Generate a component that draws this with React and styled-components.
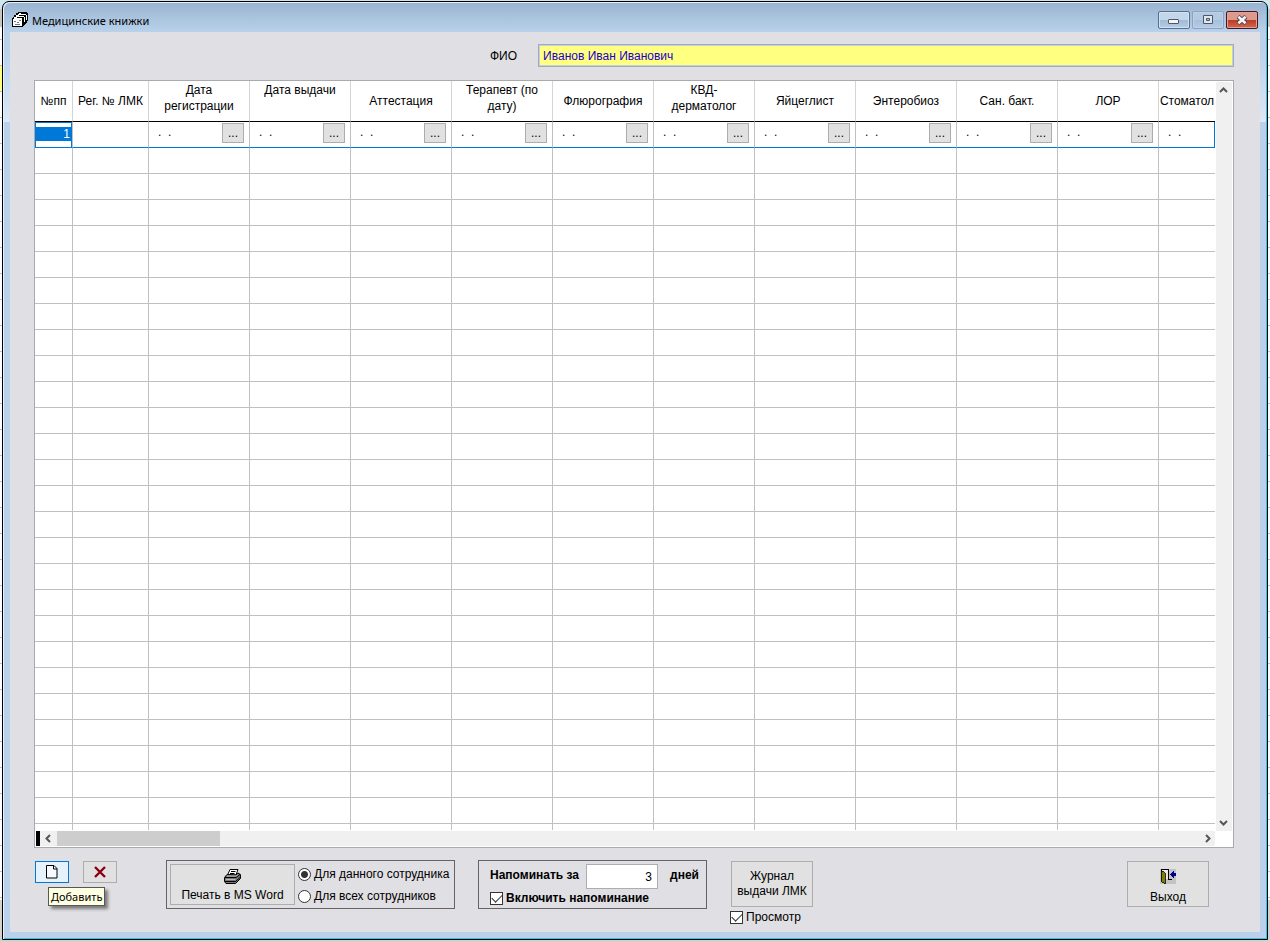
import { useState } from 'react';
import styled, { createGlobalStyle, css } from 'styled-components';

const GlobalStyle = createGlobalStyle`
    * {
        box-sizing: border-box;
    }
    body {
        margin: 0;
        background: #d4d0cb;
        font-family: "Liberation Sans", Arial, sans-serif;
        font-size: 12px;
        line-height: 16px;
        color: #000;
    }
    button, input {
        font: inherit;
        color: inherit;
    }
`;

const Desktop = styled.div`
    height: 100vh;
    min-height: 480px;
    padding: 1px 2px 2px;
    background:
        linear-gradient(#cfe6ee 0 9px, #c9c5bf 9px 27px, transparent 27px 66px, #ffff80 66px 91px, transparent 91px) left / 2px 100% no-repeat,
        linear-gradient(#cfe6ee 0 9px, #c9c5bf 9px 27px, transparent 27px) right / 2px 100% no-repeat,
        linear-gradient(to top, #d4d0cb 0 42px, transparent 42px),
        linear-gradient(#cfe6ee 0 9px, transparent 9px),
        repeating-linear-gradient(#fff 0 13px, #c0c0c0 13px 14px, #fff 14px 26px);
`;

const Window = styled.section`
    display: flex;
    flex-direction: column;
    height: 100%;
    padding: 0 7px;
    border: 1px solid #000;
    border-bottom-color: #000;
    border-radius: 7px 7px 0 0;
    padding-bottom: 7px;
    background: linear-gradient(#99b4d1 0, #b9d1ea 30px, #b9d1ea 48px, #dbe8f6 120px, #b9d1ea 120px);
    box-shadow: inset 1px 1px 0 #e6f2fb, inset -1px -1px 0 #2bc8e6;
`;

const TitleBar = styled.header`
    display: flex;
    align-items: center;
    height: 30px;
    padding: 5px 2px 0;
`;

const Title = styled.h1`
    flex: 1;
    margin: 0 0 0 4px;
    padding-top: 2px;
    font: 11px/16px "Noto Sans", sans-serif;
`;

const WindowButtons = styled.div`
    display: flex;
    gap: 2px;
`;

const WindowButton = styled.button`
    display: flex;
    align-items: center;
    justify-content: center;
    width: 32px;
    height: 18px;
    padding: 0;
    border: 1px solid ${(props) => props.$border};
    border-radius: 2px;
    background: ${(props) => props.$background};
    box-shadow: inset 0 0 0 1px ${(props) => props.$glow};
`;

const Client = styled.main`
    display: flex;
    flex: 1;
    flex-direction: column;
    min-height: 0;
    padding: 12px 26px 9px 24px;
    background: #e0dfe3;
`;

const NameRow = styled.div`
    display: flex;
    align-items: center;
    gap: 21px;
    margin-bottom: 13px;
    padding-left: 38%;
`;

const NameInput = styled.input`
    flex: 1;
    height: 23px;
    padding: 0 4px;
    border: 1px solid #a9a9b0;
    background: #ffff80;
    box-shadow: inset 0 0 0 1px #b9d1ea;
    color: #2000d0;
`;

const GridFrame = styled.div`
    display: flex;
    flex: 1;
    flex-direction: column;
    min-height: 0;
    border: 1px solid #a9a9ae;
    background: #fff;
`;

const GridBody = styled.div`
    display: flex;
    flex: 1;
    min-height: 0;
`;

const GridViewport = styled.div`
    flex: 1;
    min-width: 0;
    margin-bottom: 1px;
    overflow: hidden;
`;

const Table = styled.table`
    width: 100%;
    table-layout: fixed;
    border-collapse: separate;
    border-spacing: 0;
`;

const Th = styled.th`
    width: ${(props) => (props.$width ? `${props.$width}px` : 'auto')};
    height: 41px;
    padding: 0;
    overflow: hidden;
    border-right: 1px solid #d4d4d4;
    border-bottom: 1px solid #000;
    font-weight: normal;
    white-space: pre;
    vertical-align: middle;
    &:last-child {
        border-right: 0;
    }
    ${(props) => props.$tall && css`
        padding-top: 1px;
        vertical-align: top;
    `}
`;

const Td = styled.td`
    height: 26px;
    padding: 0;
    overflow: hidden;
    border-right: 1px solid #c0c0c0;
    border-bottom: 1px solid #c0c0c0;
    vertical-align: top;
    &:last-child {
        border-right: 0;
    }
`;

const CurrentRow = styled.tr`
    ${Td} {
        border-bottom-color: #0078d7;
    }
    ${Td}:last-child {
        border-right: 1px solid #0078d7;
    }
`;

const ActiveCell = styled.div`
    height: 25px;
    padding: 4px 0;
    border: 1px solid #0078d7;
    border-bottom: 0;
`;

const ActiveValue = styled.div`
    height: 14px;
    padding-right: 1px;
    background: #0078d7;
    color: #fff;
    line-height: 14px;
    text-align: right;
`;

const DateCell = styled.div`
    display: flex;
    align-items: flex-start;
    justify-content: space-between;
    padding: 1px 5px 0 9px;
`;

const DateInput = styled.input`
    width: 40px;
    height: 18px;
    padding: 0;
    border: 0;
    background: transparent;
`;

const PickButton = styled.button`
    width: 22px;
    height: 20px;
    padding: 0;
    border: 1px solid #adadad;
    background: #e1e1e1;
    line-height: 18px;
`;

const VerticalScroll = styled.div`
    display: flex;
    flex-direction: column;
    justify-content: space-between;
    align-items: center;
    width: 16px;
    margin: 1px 1px 0;
    padding: 4px 0;
    background: #f0f0f0;
`;

const HorizontalScroll = styled.div`
    display: flex;
    height: 15px;
    margin: 0 18px 1px 1px;
    background: #f0f0f0;
`;

const SplitMark = styled.div`
    width: 4px;
    background: #000;
`;

const ScrollButton = styled.button`
    display: flex;
    align-items: center;
    justify-content: center;
    width: 17px;
    padding: 0;
    border: 0;
    background: transparent;
    ${VerticalScroll} & {
        width: 15px;
        margin-right: 1px;
    }
    ${HorizontalScroll} &:last-child {
        width: 15px;
    }
`;

const Thumb = styled.div`
    width: 163px;
    margin-right: auto;
    background: #cdcdcd;
`;

const Footer = styled.footer`
    display: flex;
    align-items: flex-start;
    gap: 23px;
    height: 63px;
    margin-top: 12px;
    padding: 0 25px 0 1px;
`;

const RecordButtons = styled.div`
    position: relative;
    display: flex;
    gap: 14px;
    margin-right: 26px;
    padding-top: 1px;
`;

const PushButton = styled.button`
    display: flex;
    flex-direction: column;
    align-items: center;
    justify-content: center;
    width: ${(props) => props.$width}px;
    height: ${(props) => props.$height}px;
    padding: 0;
    border: 1px solid ${(props) => (props.$hot ? '#0078d7' : '#adadad')};
    background: ${(props) => (props.$hot ? '#e5f1fb' : '#e1e1e1')};
    line-height: 15px;
`;

const ExitButton = styled(PushButton)`
    gap: 6px;
    margin: 1px 0 0 auto;
    padding-top: 6px;
`;

const PrintButton = styled(PushButton)`
    gap: 4px;
    padding-top: 3px;
`;

const Tooltip = styled.div`
    position: absolute;
    top: 27px;
    left: 13px;
    height: 19px;
    padding: 0 2px;
    border: 1px solid #575757;
    background: #ffffe1;
    box-shadow: 3px 3px 3px rgba(0, 0, 0, 0.45);
    font: 11px/17px "Noto Sans", sans-serif;
    white-space: nowrap;
`;

const Group = styled.fieldset`
    min-width: 0;
    height: 49px;
    margin: 0;
    padding: 0;
    border: 1px solid #646468;
`;

const PrintGroup = styled(Group)`
    display: flex;
    gap: 3px;
    width: 289px;
    padding: 3px 0 0 3px;
`;

const RadioList = styled.div`
    display: flex;
    flex-direction: column;
    gap: 6px;
    padding-top: 2px;
`;

const CheckLabel = styled.label`
    display: flex;
    align-items: center;
    gap: 3px;
    height: 16px;
    white-space: nowrap;
    font-weight: ${(props) => (props.$bold ? 'bold' : 'normal')};
`;

const Radio = styled.input.attrs({ type: 'radio' })`
    appearance: none;
    flex: none;
    width: 13px;
    height: 13px;
    margin: 0;
    border: 1px solid #333;
    border-radius: 50%;
    background: #fff;
    &:checked {
        background: radial-gradient(circle, #333 3px, #fff 4px);
    }
`;

const Check = styled.input.attrs({ type: 'checkbox' })`
    appearance: none;
    display: grid;
    flex: none;
    place-content: center;
    width: 13px;
    height: 13px;
    margin: 0;
    border: 1px solid #333;
    background: #fff;
    &:checked::before {
        content: "";
        width: 9px;
        height: 5px;
        margin-top: -3px;
        border: solid #333;
        border-width: 0 0 1px 1px;
        transform: rotate(-45deg);
    }
`;

const RemindGroup = styled(Group)`
    width: 229px;
    padding: 3px 7px 0 11px;
`;

const RemindRow = styled.div`
    display: grid;
    grid-template-columns: 96px 72px 1fr;
    margin-bottom: 1px;
    font-weight: bold;
    line-height: 23px;
`;

const DaysUnit = styled.span`
    text-align: right;
`;

const DaysInput = styled.input`
    width: 72px;
    height: 25px;
    padding: 0 5px;
    border: 1px solid #abadb3;
    background: #fff;
    font-weight: normal;
    text-align: right;
`;

const Journal = styled.div`
    display: flex;
    flex-direction: column;
    gap: 2px;
    padding-top: 1px;
`;

const JournalButton = styled(PushButton)`
    margin-left: 1px;
`;

const columns = [
    { title: '№пп', width: 38 },
    { title: 'Рег. № ЛМК', width: 76 },
    { title: 'Дата\nрегистрации', width: 101 },
    { title: 'Дата выдачи\n ', width: 101 },
    { title: 'Аттестация', width: 101 },
    { title: 'Терапевт (по\nдату)', width: 101 },
    { title: 'Флюрография', width: 101 },
    { title: 'КВД-\nдерматолог', width: 101 },
    { title: 'Яйцеглист', width: 101 },
    { title: 'Энтеробиоз', width: 101 },
    { title: 'Сан. бакт.', width: 101 },
    { title: 'ЛОР', width: 101 },
    { title: 'Стоматол' },
];

const emptyRows = Array.from({ length: 27 }, (_, i) => i);

const arrows = {
    up: 'M1 6 L4.5 2.5 L8 6',
    down: 'M1 3 L4.5 6.5 L8 3',
    left: 'M6 1 L2.5 4.5 L6 8',
    right: 'M3 1 L6.5 4.5 L3 8',
};

function Arrow({ to }) {
    return (
        <svg width="9" height="9" viewBox="0 0 9 9">
            <path d={arrows[to]} fill="none" stroke="#555" strokeWidth="2" />
        </svg>
    );
}

function CardsIcon() {
    return (
        <svg width="16" height="16" viewBox="0 0 16 16" shapeRendering="crispEdges">
            <path d="M6 0h9v1h1v8h-1v2h-1v1h-1v1h-1v1h-1v1H0V6h1V5h1V3h2V1h2z" fill="#000" />
            <path d="M7 1h2v1h5v1H6V2h1zM4 3h3v1h5v1H4zM2 5h3v1h5v1H2zM1 7h9v7H1zM12 5h1v5h-1zM14 3h1v5h-1z" fill="#fff" />
            <path d="M2 9h2v1H2zM5 10h2v1H5zM7 8h2v1H7zM3 12h5v1H3z" fill="#777" />
        </svg>
    );
}

function MinimizeIcon() {
    return (
        <svg width="12" height="10" viewBox="0 0 12 10">
            <rect x="0.5" y="4.5" width="10" height="4" rx="0.5" fill="#f4f4f4" stroke="#4c5766" />
        </svg>
    );
}

function MaximizeIcon() {
    return (
        <svg width="12" height="10" viewBox="0 0 12 10">
            <path d="M1.5 0.5h9v8h-9z" fill="#dfe6ee" stroke="#4c5766" />
            <path d="M4.5 3.5h3v2h-3z" fill="#a9c1da" stroke="#4c5766" />
        </svg>
    );
}

function CloseIcon() {
    return (
        <svg width="12" height="10" viewBox="0 0 12 10">
            <path d="M2 1.5 L10 8.5 M10 1.5 L2 8.5" stroke="#5a4450" strokeWidth="4.4" />
            <path d="M2.4 1.8 L9.6 8.2 M9.6 1.8 L2.4 8.2" stroke="#f6f4f4" strokeWidth="2.6" />
        </svg>
    );
}

function PageIcon() {
    return (
        <svg width="12" height="14" viewBox="0 0 12 14">
            <path d="M0.5 0.5h7.5l3 3v9.5h-10.5z" fill="#f6fafe" stroke="#000" />
            <path d="M7.5 0.5v3.5h3.5" fill="none" stroke="#000" />
        </svg>
    );
}

function DeleteIcon() {
    return (
        <svg width="12" height="12" viewBox="0 0 12 12">
            <path d="M1 1 L11 11 M11 1 L1 11" stroke="#8b0010" strokeWidth="2.4" />
        </svg>
    );
}

function PrinterIcon() {
    return (
        <svg width="17" height="15" viewBox="0 0 17 15">
            <path d="M6 0.5h8l-2 5.5H3.5z" fill="#fff" stroke="#000" />
            <path d="M7 2.5h4.5M6 4.5h4.5" stroke="#000" />
            <path d="M3 5.5 L0.5 8.5 V12.5 L2 14.5 H11.5 L16.5 9.5 V5.5 L14 4 L12.5 6 Z" fill="#777" stroke="#000" />
            <path d="M1 8.5h11l4-3" fill="none" stroke="#000" />
            <path d="M3 7h9l2-1.5M2 10.5h9.5" fill="none" stroke="#bbb" />
            <path d="M1 12.5h10.5l4.5-4" fill="none" stroke="#000" />
        </svg>
    );
}

function ExitIcon() {
    return (
        <svg width="16" height="15" viewBox="0 0 16 15" shapeRendering="crispEdges">
            <path d="M0 0h16v15H0z" fill="#c3c3c3" />
            <path d="M2 1h6v9H5z" fill="#efe6ea" />
            <path d="M1 0h8v10h3v1H8V1H2v11H1z" fill="#000" />
            <path d="M1 1 L5 4 V15 L1 12z" fill="#808000" stroke="#000" strokeWidth="0.8" />
            <path d="M10 5h1V4h1V3h1V2h1v2h2v3h-2v2h-1V8h-1V7h-1V6h-1z" fill="#000090" />
        </svg>
    );
}

function DateField({ label, picker }) {
    const [value, setValue] = useState('.  .');
    return (
        <DateCell>
            <DateInput aria-label={label} value={value} onChange={(e) => setValue(e.target.value)} />
            {picker && <PickButton type="button" aria-label={`${label}: выбрать дату`}>...</PickButton>}
        </DateCell>
    );
}

function BooksTable() {
    return (
        <Table>
            <thead>
                <tr>
                    {columns.map(({ title, width }) => (
                        <Th key={title} $width={width} $tall={title.includes('\n')}>{title}</Th>
                    ))}
                </tr>
            </thead>
            <tbody>
                <CurrentRow>
                    <Td>
                        <ActiveCell>
                            <ActiveValue>1</ActiveValue>
                        </ActiveCell>
                    </Td>
                    <Td />
                    {columns.slice(2).map(({ title, width }) => (
                        <Td key={title}>
                            <DateField label={title.replace('\n', ' ').trim()} picker={Boolean(width)} />
                        </Td>
                    ))}
                </CurrentRow>
                {emptyRows.map((row) => (
                    <tr key={row}>
                        {columns.map(({ title }) => <Td key={title} />)}
                    </tr>
                ))}
            </tbody>
        </Table>
    );
}

export default function App() {
    const [scope, setScope] = useState('one');
    const [days, setDays] = useState('3');
    const [remind, setRemind] = useState(true);
    const [preview, setPreview] = useState(true);

    return (
        <Desktop>
            <GlobalStyle />
            <Window>
                <TitleBar>
                    <CardsIcon />
                    <Title>Медицинские книжки</Title>
                    <WindowButtons>
                        <WindowButton aria-label="Свернуть" $border="#566f8c" $glow="#d3e2f1" $background="linear-gradient(#c3d6ea 50%, #9fbad6 50%, #b6cee6)">
                            <MinimizeIcon />
                        </WindowButton>
                        <WindowButton aria-label="Развернуть" $border="#8aa3c0" $glow="#bdd2e8" $background="linear-gradient(#b3cae2 50%, #a6c0dc 50%, #b4cce5)">
                            <MaximizeIcon />
                        </WindowButton>
                        <WindowButton aria-label="Закрыть" $border="#4b1420" $glow="#e0a294" $background="linear-gradient(#dd9a8c 50%, #b93a22 50%, #cf6a50)">
                            <CloseIcon />
                        </WindowButton>
                    </WindowButtons>
                </TitleBar>
                <Client>
                    <NameRow>
                        <label htmlFor="fio">ФИО</label>
                        <NameInput id="fio" defaultValue="Иванов Иван Иванович" />
                    </NameRow>
                    <GridFrame>
                        <GridBody>
                            <GridViewport>
                                <BooksTable />
                            </GridViewport>
                            <VerticalScroll>
                                <ScrollButton aria-label="Вверх"><Arrow to="up" /></ScrollButton>
                                <ScrollButton aria-label="Вниз"><Arrow to="down" /></ScrollButton>
                            </VerticalScroll>
                        </GridBody>
                        <HorizontalScroll>
                            <SplitMark />
                            <ScrollButton aria-label="Влево"><Arrow to="left" /></ScrollButton>
                            <Thumb />
                            <ScrollButton aria-label="Вправо"><Arrow to="right" /></ScrollButton>
                        </HorizontalScroll>
                    </GridFrame>
                    <Footer>
                        <RecordButtons>
                            <PushButton type="button" aria-label="Добавить" $width={34} $height={22} $hot>
                                <PageIcon />
                            </PushButton>
                            <PushButton type="button" aria-label="Удалить" $width={34} $height={22}>
                                <DeleteIcon />
                            </PushButton>
                            <Tooltip role="tooltip">Добавить</Tooltip>
                        </RecordButtons>
                        <PrintGroup>
                            <PrintButton type="button" $width={125} $height={41}>
                                <PrinterIcon />
                                Печать в MS Word
                            </PrintButton>
                            <RadioList>
                                <CheckLabel>
                                    <Radio name="scope" checked={scope === 'one'} onChange={() => setScope('one')} />
                                    Для данного сотрудника
                                </CheckLabel>
                                <CheckLabel>
                                    <Radio name="scope" checked={scope === 'all'} onChange={() => setScope('all')} />
                                    Для всех сотрудников
                                </CheckLabel>
                            </RadioList>
                        </PrintGroup>
                        <RemindGroup>
                            <RemindRow>
                                <label htmlFor="days">Напоминать за</label>
                                <DaysInput id="days" value={days} onChange={(e) => setDays(e.target.value)} />
                                <DaysUnit>дней</DaysUnit>
                            </RemindRow>
                            <CheckLabel $bold>
                                <Check checked={remind} onChange={(e) => setRemind(e.target.checked)} />
                                Включить напоминание
                            </CheckLabel>
                        </RemindGroup>
                        <Journal>
                            <JournalButton type="button" $width={82} $height={46}>
                                <span>Журнал</span>
                                <span>выдачи ЛМК</span>
                            </JournalButton>
                            <CheckLabel>
                                <Check checked={preview} onChange={(e) => setPreview(e.target.checked)} />
                                Просмотр
                            </CheckLabel>
                        </Journal>
                        <ExitButton type="button" $width={82} $height={46}>
                            <ExitIcon />
                            Выход
                        </ExitButton>
                    </Footer>
                </Client>
            </Window>
        </Desktop>
    );
}
